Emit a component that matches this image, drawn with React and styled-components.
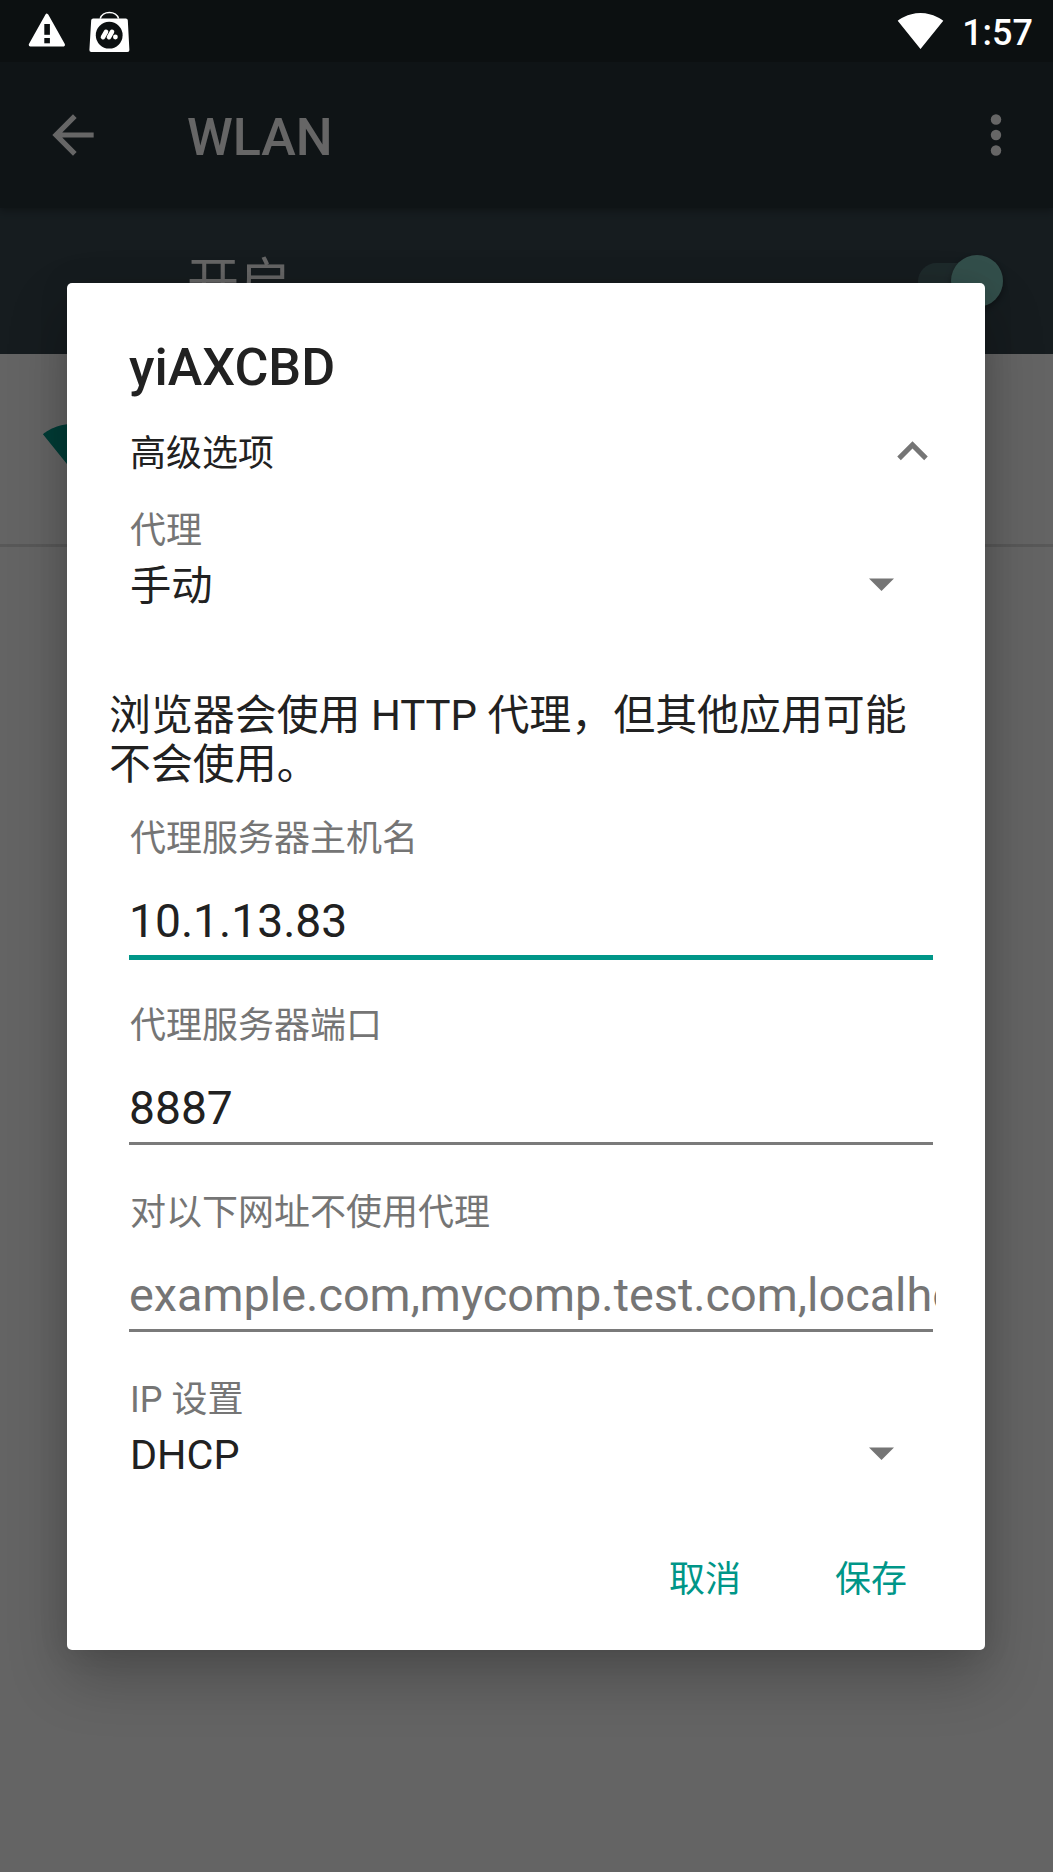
import React from "react";
import styled, { createGlobalStyle, css } from "styled-components";

const Global = createGlobalStyle`
  html, body { margin: 0; padding: 0; }
  body {
    width: 1053px;
    height: 1872px;
    overflow: hidden;
    background: #fafafa;
    font-family: Roboto, "Noto Sans CJK SC", sans-serif;
    color: #212121;
  }
  *, *::before, *::after { box-sizing: border-box; }
  svg { display: block; flex: none; }
`;

const Screen = styled.div`
  position: relative;
  display: flex;
  flex-direction: column;
  width: 1053px;
  height: 1872px;
  overflow: hidden;
`;

const StatusBar = styled.header`
  position: relative;
  z-index: 3;
  display: flex;
  justify-content: space-between;
  height: 62px;
  flex: none;
  padding: 0 20px 0 26px;
  background: #0c1011;
  color: #fff;
`;

const StatusGroup = styled.div`
  display: flex;
  align-items: flex-start;
  gap: ${(p) => p.$gap}px;
  padding-top: ${(p) => p.$top}px;
`;

const Clock = styled.span`
  padding-top: 5px;
  font-size: 36px;
  font-weight: 500;
  line-height: 42px;
`;

const AppBar = styled.div`
  position: relative;
  z-index: 1;
  display: flex;
  align-items: center;
  height: 146px;
  flex: none;
  padding: 0 26px 0 42px;
  background: #263238;
  color: #fff;
  box-shadow: 0 3px 7px rgba(0, 0, 0, 0.28);
`;

const AppTitle = styled.h1`
  flex: 1;
  margin: 6px 0 0 83px;
  font-size: 52px;
  font-weight: 500;
  line-height: 60px;
`;

const SwitchBar = styled.div`
  display: flex;
  align-items: center;
  justify-content: space-between;
  height: 146px;
  flex: none;
  padding: 0 50px 0 187px;
  background: #37474f;
  color: #fff;
`;

const SwitchLabel = styled.span`
  padding-top: 6px;
  font-size: 52px;
  line-height: 60px;
`;

const Track = styled.div`
  display: flex;
  align-items: center;
  justify-content: flex-end;
  width: 85px;
  height: 37px;
  border-radius: 19px;
  background: #4d696d;
`;

const Thumb = styled.div`
  width: 52px;
  height: 52px;
  border-radius: 50%;
  background: #80c5bb;
  box-shadow: 0 3px 6px rgba(0, 0, 0, 0.35);
`;

const NetworkRow = styled.div`
  height: 193px;
  flex: none;
  padding: 62px 42px 0;
  border-bottom: 3px solid #dcdcdc;
`;

const Scrim = styled.div`
  position: absolute;
  inset: 0;
  z-index: 2;
  display: flex;
  justify-content: center;
  align-items: flex-start;
  padding: 283px 68px 0 67px;
  background: rgba(0, 0, 0, 0.6);
`;

const Dialog = styled.section`
  display: flex;
  flex-direction: column;
  width: 918px;
  height: 1367px;
  padding: 55px 49px 0 62px;
  border-radius: 5px;
  background: #fff;
  box-shadow: 0 27px 60px rgba(0, 0, 0, 0.24), 0 0 30px rgba(0, 0, 0, 0.1);
`;

const DialogTitle = styled.h2`
  margin: 0;
  font-size: 52px;
  font-weight: 500;
  line-height: 60px;
`;

const AdvancedRow = styled.div`
  display: flex;
  align-items: center;
  justify-content: space-between;
  height: 62px;
  margin: 22px -6.6px 0 0;
  padding-left: 1px;
  font-size: 36px;
  line-height: 44px;
`;

const AdvancedLabel = styled.span`
  padding-top: 6px;
`;

const SelectBlock = styled.div`
  padding-left: 1px;
  margin-top: ${(p) => p.$top || 0}px;
`;

const Label = styled.div`
  font-size: 36px;
  line-height: 44px;
  color: #757575;
`;

const SelectValue = styled.div`
  display: flex;
  align-items: center;
  justify-content: space-between;
  margin-top: 8px;
  padding-right: 42.5px;
  font-size: 41.3px;
  line-height: 50px;

  svg {
    margin-bottom: 3px;
  }
`;

const Hint = styled.p`
  margin: 80px 0 28px -20px;
  width: 830px;
  font-size: 41.93px;
  line-height: 49px;
`;

const Field = styled.div`
  height: 187px;
`;

const FieldLabel = styled(Label)`
  padding-left: 1px;
`;

const Input = styled.div`
  margin-top: 30px;
  overflow: hidden;
  white-space: nowrap;
  font-size: ${(p) => (p.$placeholder ? 46.82 : 46.2)}px;
  line-height: 60px;
  color: ${(p) => (p.$placeholder ? "#757575" : "#212121")};
`;

const Underline = styled.div`
  margin: 3.5px 3px 0 0;
  height: 3px;
  background: #7a7a7a;
  ${(p) =>
    p.$focused &&
    css`
      margin-top: 4px;
      height: 5px;
      background: #009688;
    `}
`;

const Actions = styled.footer`
  display: flex;
  justify-content: flex-end;
  gap: 94px;
  margin-top: 78px;
  padding-right: 29px;
`;

const Action = styled.button`
  padding: 0;
  border: 0;
  background: none;
  color: #009688;
  font: inherit;
  font-size: 36px;
  line-height: 44px;
`;

const WifiIcon = ({ size, color }) => (
  <svg width={size} height={size} viewBox="0 0 24 24" fill={color}>
    <path d="M12.01 21.49L23.64 7c-.45-.34-4.93-4-11.64-4C5.28 3 .81 6.66.36 7l11.63 14.49.01.01.01-.01z" />
  </svg>
);

const WarningIcon = () => (
  <svg width="42" height="38" viewBox="0 0 42 38">
    <path
      d="M20.600 3.600L38.200 35H3z"
      transform="translate(1.500 .9) scale(.94)"
      fill="#fff"
      stroke="#fff"
      strokeWidth="3.400"
      strokeLinejoin="round"
    />
    <rect x="18.300" y="13" width="5.600" height="10.800" fill="#0c1011" />
    <rect x="18.300" y="27" width="5.600" height="5.300" fill="#0c1011" />
  </svg>
);

const BagIcon = () => (
  <svg width="41" height="42" viewBox="0 0 41 42">
    <path d="M11.200 7.600a9.400 7.800 0 0 1 18.400 0" fill="none" stroke="#fff" strokeWidth="1.500" />
    <path
      d="M4.200 7.200h32.600a2 2 0 0 1 2 1.900l1.600 29.600a2 2 0 0 1-2 2.100H2.400a2 2 0 0 1-2-2.100L2.200 9.100a2 2 0 0 1 2-1.900z"
      transform="translate(0 .2)"
      fill="#fff"
    />
    <circle cx="20.200" cy="24.200" r="13.400" fill="#0c1011" />
    <g stroke="#fff" strokeWidth="4.600" strokeLinecap="round" fill="none">
      <path d="M14 26.200L17 20.800" />
      <path d="M20 26.200L23 20.800" />
    </g>
    <circle cx="26.400" cy="26" r="2.400" fill="#fff" />
  </svg>
);

const BackIcon = () => (
  <svg width="62" height="62" viewBox="0 0 24 24" fill="#fff">
    <path d="M20 11H7.830l5.590-5.590L12 4l-8 8 8 8 1.410-1.410L7.830 13H20v-2z" />
  </svg>
);

const MoreIcon = () => (
  <svg width="62" height="62" viewBox="0 0 24 24" fill="#fff">
    <circle cx="12" cy="6" r="2.020" />
    <circle cx="12" cy="12" r="2.020" />
    <circle cx="12" cy="18" r="2.020" />
  </svg>
);

const CollapseIcon = () => (
  <svg width="61" height="61" viewBox="0 0 24 24" fill="#757575">
    <path d="M12 8l-6 6 1.410 1.410L12 10.830l4.590 4.580L18 14z" />
  </svg>
);

const Caret = () => (
  <svg width="25" height="13" viewBox="0 0 25 13" fill="#757575">
    <path d="M0 .4h25L12.500 13z" />
  </svg>
);

const Select = ({ label, value, top }) => (
  <SelectBlock $top={top}>
    <Label>{label}</Label>
    <SelectValue>
      {value}
      <Caret />
    </SelectValue>
  </SelectBlock>
);

const TextField = ({ label, value, placeholder, focused }) => (
  <Field>
    <FieldLabel>{label}</FieldLabel>
    <Input $placeholder={!value}>{value || placeholder}</Input>
    <Underline $focused={focused} />
  </Field>
);

export default function App() {
  return (
    <>
      <Global />
      <Screen>
        <StatusBar>
          <StatusGroup $gap={21} $top={10.5}>
            <WarningIcon />
            <BagIcon />
          </StatusGroup>
          <StatusGroup $gap={18} $top={7}>
            <WifiIcon size={47} color="#fff" />
            <Clock>1:57</Clock>
          </StatusGroup>
        </StatusBar>
        <AppBar>
          <BackIcon />
          <AppTitle>WLAN</AppTitle>
          <MoreIcon />
        </AppBar>
        <SwitchBar>
          <SwitchLabel>开启</SwitchLabel>
          <Track>
            <Thumb />
          </Track>
        </SwitchBar>
        <NetworkRow>
          <WifiIcon size={62.4} color="#009688" />
        </NetworkRow>
        <Scrim>
          <Dialog>
            <DialogTitle>yiAXCBD</DialogTitle>
            <AdvancedRow>
              <AdvancedLabel>高级选项</AdvancedLabel>
              <CollapseIcon />
            </AdvancedRow>
            <Select label="代理" value="手动" top={27} />
            <Hint>浏览器会使用 HTTP 代理，但其他应用可能不会使用。</Hint>
            <TextField label="代理服务器主机名" value="10.1.13.83" focused />
            <TextField label="代理服务器端口" value="8887" />
            <TextField
              label="对以下网址不使用代理"
              placeholder="example.com,mycomp.test.com,localhost"
            />
            <Select label="IP 设置" value="DHCP" />
            <Actions>
              <Action>取消</Action>
              <Action>保存</Action>
            </Actions>
          </Dialog>
        </Scrim>
      </Screen>
    </>
  );
}
